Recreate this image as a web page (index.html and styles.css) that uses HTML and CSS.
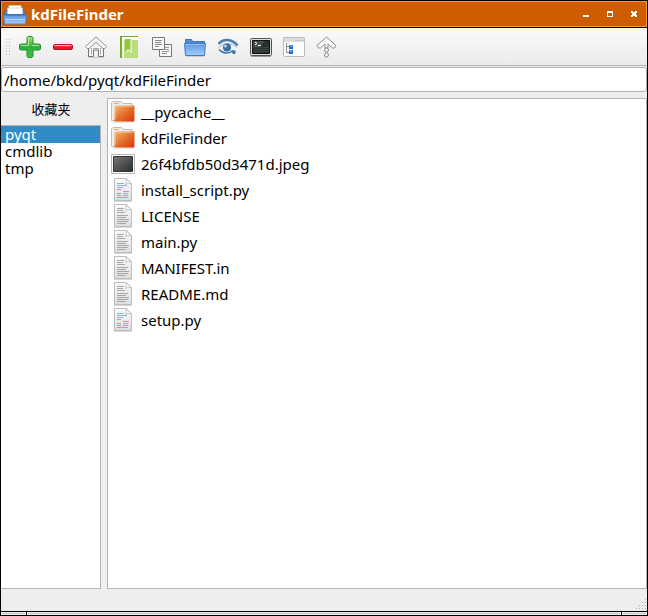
FILE: index.html
```html
<!DOCTYPE html>
<html lang="zh-CN">
<head>
<meta charset="utf-8">
<title>kdFileFinder</title>
<link rel="stylesheet" href="styles.css">
</head>
<body>
<svg class="defs" width="0" height="0" aria-hidden="true">
  <defs>
    <linearGradient id="green" x1="0" y1="0" x2="0" y2="1"><stop offset="0" stop-color="#a5e878"/><stop offset=".5" stop-color="#2fae3c"/><stop offset="1" stop-color="#3fc43f"/></linearGradient>
    <linearGradient id="red" x1="0" y1="0" x2="0" y2="1"><stop offset="0" stop-color="#f4a0a4"/><stop offset=".45" stop-color="#e0242e"/><stop offset="1" stop-color="#d8141e"/></linearGradient>
    <linearGradient id="blue" x1="0" y1="0" x2="0" y2="1"><stop offset="0" stop-color="#5b97e6"/><stop offset="1" stop-color="#a4cdfa"/></linearGradient>
    <linearGradient id="orange" x1="0" y1="0" x2="1" y2="1"><stop offset="0" stop-color="#f8b878"/><stop offset=".5" stop-color="#e2702c"/><stop offset="1" stop-color="#d83408"/></linearGradient>
    <linearGradient id="dark" x1="0" y1="0" x2="1" y2="1"><stop offset="0" stop-color="#7a7a7a"/><stop offset="1" stop-color="#2c2c2c"/></linearGradient>
    <linearGradient id="paper" x1="0" y1="0" x2="0" y2="1"><stop offset="0" stop-color="#fafafa"/><stop offset="1" stop-color="#dedede"/></linearGradient>
    <symbol id="folder" viewBox="0 0 24 24">
      <path d="M.5 20.500V3L2 1.500h8.500l2 2h8.500v17z" fill="#eee" stroke="#bcbcbc"/>
      <path d="M3 3.500h5" stroke="#f2a470"/>
      <path d="M2 22h21.500" stroke="#ccc"/>
      <path d="M3.500 21V7q0-1.500 1.500-1.500h18.500v14.500q0 1.500-1.500 1.500H4z" fill="url(#orange)"/>
      <path d="M4.500 19V6.500h18" fill="none" stroke="#fbc491" stroke-opacity=".6"/>
    </symbol>
    <symbol id="image" viewBox="0 0 24 24">
      <path d="M.5 2.500h23v19H.5z" fill="#fff" stroke="#b4b4b4"/>
      <path d="M2.500 4.500h19v15h-19z" fill="url(#dark)" stroke="#333"/>
    </symbol>
    <symbol id="page" viewBox="0 0 24 24">
      <path d="M3.500.500h12l5 5v17h-17z" fill="url(#paper)" stroke="#bdbdbd"/>
      <path d="M15 .5q1 4-.5 6 3-2 6-.5z" fill="#fff" stroke="#c4c4c4"/>
      <path d="M3 23.500h18" stroke="#d8d8d8"/>
    </symbol>
    <symbol id="text" viewBox="0 0 24 24">
      <use href="#page"/>
      <path d="M6 4.500h7M6 6.500h6M6 8.500h8M6 11.500h11M6 13.500h9M6 15.500h12M6 17.500h11M6 19.500h9" stroke="#a6a6a6"/>
    </symbol>
    <symbol id="script" viewBox="0 0 24 24">
      <use href="#page"/>
      <path d="M6 5.500h7M6 7.500h10M6 9.500h6M12 15.500h5M9 19.500h8" stroke="#86b6d8"/>
      <path d="M6 11.500h4M12 13.500h6M6 17.500h4M12 17.500h5" stroke="#dc88b8"/>
      <path d="M6 15.500h4M6 19.500h3" stroke="#7dbb7d"/>
    </symbol>
  </defs>
</svg>
<div class="window">
  <header class="titlebar">
    <svg width="24" height="24" viewBox="0 0 24 24" aria-hidden="true">
      <path d="M1.500 12 4 7h16l2.500 5z" fill="#5a8fd6" stroke="#3f6fb4"/>
      <path d="M4.500 13V6h1.500V3.500h12V6h1.500v7z" fill="#fff" stroke="#c6c6c6"/>
      <path d="M6.500 6h11" stroke="#ddd"/>
      <path d="M1 12h22v1.500H1z" fill="#3f6fb4"/>
      <path d="M.5 13.500h23l-1 8.500h-21z" fill="url(#blue)" stroke="#4f83c8"/>
      <path d="M2 17.500h20" stroke="#b8d8fc"/>
    </svg>
    <h1>kdFileFinder</h1>
    <div class="controls">
      <button aria-label="最小化"><svg width="8" height="8" viewBox="0 0 8 8"><path d="M1 5h6v2H1z" fill="#fff"/></svg></button>
      <button aria-label="最大化"><svg width="8" height="8" viewBox="0 0 8 8"><path d="M1 1h6v6H1zM2 3v3h4V3z" fill="#fff" fill-rule="evenodd"/></svg></button>
      <button aria-label="关闭"><svg width="8" height="8" viewBox="0 0 8 8"><path d="M1 1h2v1h2V1h2v2H6v2h1v2H5V6H3v1H1V5h1V3H1z" fill="#fff"/></svg></button>
    </div>
  </header>
  <nav class="toolbar">
    <svg class="grip" viewBox="0 0 6 18" aria-hidden="true"><path d="M.5 1v17M3.500 1v17" stroke="#bbb" stroke-dasharray="1 2"/></svg>
    <button aria-label="添加"><svg viewBox="0 0 22 22"><path d="M9 .5h4l1 1V8h6.500l1 1v4l-1 1H14v6.500l-1 1H9l-1-1V14H1.500l-1-1V9l1-1H8V1.500z" fill="url(#green)" stroke="#23902b"/><path d="M9.500 9.500v-8M1.500 9.500h8M13 9.500h7" fill="none" stroke="#bff0a0" stroke-opacity=".8"/></svg></button>
    <button aria-label="删除"><svg viewBox="0 0 22 22"><rect x="1.500" y="8.500" width="19" height="5" rx="1.500" fill="url(#red)" stroke="#b5141c"/><path d="M3 9.500h16" stroke="#f7b0b4"/></svg></button>
    <button aria-label="主目录"><svg viewBox="0 0 22 22"><path d="M3.500 11v9.500h5V14h5v6.500h5V11L11 5z" fill="#f4f4f4" stroke="#777" stroke-linejoin="round"/><path d="M6.500 12v6.500M15.500 12v6.500M8 12.500h6" stroke="#aaa" fill="none"/><path d="M11 1 .5 10.500l1.500 2h2l7-6.500 7 6.500h2l1.500-2z" fill="#fafafa" stroke="#8e8e8e" stroke-linejoin="round"/><path d="M3 21.500h16" stroke="#ccc"/></svg></button>
    <button aria-label="收藏"><svg viewBox="0 0 22 22"><path d="M6 4h14v18H6z" fill="#bade7c"/><path d="M2 0h18v1H4v2h2v19H2z" fill="#7bab2e"/><path d="M4 1h16v3H4z" fill="#fff"/><path d="M4 4h2v18H4z" fill="#eef7dc"/><path d="M7 3h6v13l-3-3-3 4z" fill="#91c73a"/><path d="m7 17 3-3.500 3 3V4" fill="none" stroke="#fff"/></svg></button>
    <button aria-label="复制"><svg viewBox="0 0 22 22"><path d="M8.500 8.500h12v12h-12z" fill="#f6f6f6" stroke="#777"/><path d="M14 11.500h4M14 13.500h4M11 15.500h7M11 17.500h5" stroke="#999"/><path d="M1.500 1.500h12v12h-12z" fill="#fafafa" stroke="#777"/><path d="M4 4.500h7M4 6.500h6M4 8.500h7M4 10.500h4" stroke="#8a8a8a"/></svg></button>
    <button aria-label="打开文件夹"><svg viewBox="0 0 22 22"><path d="M1.500 8V3.500h6l1 2h12V9z" fill="#5789cf" stroke="#3e72bb"/><path d="M.5 7.500h21l-1 12h-19z" fill="url(#blue)" stroke="#3f7bcd"/><path d="M1.500 8.500h19" stroke="#99c3f8"/><path d="M2 20.500h18" stroke="#ccc"/></svg></button>
    <button aria-label="查看"><svg viewBox="0 0 22 22"><path d="M2 12c4-5 12-6 17 0-4 6-12 6-17 0z" fill="#eef3f7"/><path d="M1.500 8C6 2.500 15 2.500 20.500 9.500" fill="none" stroke="#4a7fae" stroke-width="2.500"/><path d="M1 12.500c5-6.500 13-6.500 19-1" fill="none" stroke="#a3bdd4"/><circle cx="10" cy="11.500" r="4" fill="#3670a9"/><circle cx="8.500" cy="10" r="1.500" fill="#b5d2ee"/><path d="M2 13.500c4 4.500 10 4.500 14.500 1" fill="none" stroke="#41759f" stroke-width="1.500"/><path d="M14 14.500h4.500v3.500H16z" fill="#41759f"/></svg></button>
    <button aria-label="终端"><svg viewBox="0 0 22 22"><rect x=".5" y="2.500" width="21" height="17" rx="1" fill="#ddd" stroke="#555"/><path d="M2.500 4.500h17v13h-17z" fill="#26302e" stroke="#111"/><path d="M3 5h12L9 11 3 12z" fill="#5d6462" fill-opacity=".6"/><path d="m5 6 2 1.500L5 9M8 9.500h3" fill="none" stroke="#fff"/><path d="M3 11.500h16M3 13.500h16M3 15.500h16" stroke="#3b4642"/><path d="M1 20.500h20" stroke="#999"/></svg></button>
    <button aria-label="树形视图"><svg viewBox="0 0 22 22"><rect x=".5" y="1.500" width="21" height="19" rx="1" fill="#fff" stroke="#bbb"/><path d="M1 2h20v4H1z" fill="#ddd"/><path d="M12 4.500h2M15 4.500h2M18 4.500h2" stroke="#bbb"/><path d="M3.500 7v9.500H6M3.500 10.500H6" fill="none" stroke="#888"/><path d="M6 9h4v4H6zM6 14h4v4H6z" fill="#2467d4"/><path d="M7 9h2v2H7zM7 14h2v2H7z" fill="#68a3f6"/></svg></button>
    <button aria-label="上级目录"><svg viewBox="0 0 22 22"><path d="M10.500 1 1 9.500l1.500 2.500h2L9 8v4h3V8l4.500 4h2L20 9.500z" fill="#f8f8f8" stroke="#909090" stroke-linejoin="round"/><circle cx="10.500" cy="14" r="2" fill="#fafafa" stroke="#888"/><circle cx="10.500" cy="19" r="2" fill="#fafafa" stroke="#888"/></svg></button>
  </nav>
  <input class="path" type="text" aria-label="路径" value="/home/bkd/pyqt/kdFileFinder">
  <main class="panes">
    <aside class="sidebar">
      <h2>收藏夹</h2>
      <ul class="favorites">
        <li><button class="selected">pyqt</button></li>
        <li><button>cmdlib</button></li>
        <li><button>tmp</button></li>
      </ul>
    </aside>
    <ul class="files">
      <li><svg><use href="#folder"/></svg>__pycache__</li>
      <li><svg><use href="#folder"/></svg>kdFileFinder</li>
      <li><svg><use href="#image"/></svg>26f4bfdb50d3471d.jpeg</li>
      <li><svg><use href="#script"/></svg>install_script.py</li>
      <li><svg><use href="#text"/></svg>LICENSE</li>
      <li><svg><use href="#text"/></svg>main.py</li>
      <li><svg><use href="#text"/></svg>MANIFEST.in</li>
      <li><svg><use href="#text"/></svg>README.md</li>
      <li><svg><use href="#script"/></svg>setup.py</li>
    </ul>
  </main>
  <footer class="statusbar">
    <svg width="12" height="12" viewBox="0 0 12 12" aria-hidden="true"><path d="M10 0h1v1h-1zM7 3h1v1H7zM10 3h1v1h-1zM4 6h1v1H4zM7 6h1v1H7zM10 6h1v1h-1zM1 9h1v1H1zM4 9h1v1H4zM7 9h1v1H7zM10 9h1v1h-1z" fill="#aaa"/></svg>
  </footer>
  <div class="frame-bottom"><span></span><span></span><span></span></div>
</div>
</body>
</html>
```

FILE: styles.css
```css
* { box-sizing: border-box; }
body {
  margin: 0;
  font: 15px/17px "Noto Sans", "Noto Sans CJK SC", sans-serif;
  color: #000;
}
h1, h2, ul { margin: 0; padding: 0; }
ul { list-style: none; }
button {
  padding: 0;
  border: 0;
  background: none;
  font: inherit;
  color: inherit;
}
svg { display: block; flex: none; }
.defs { position: absolute; }
.window {
  display: flex;
  flex-direction: column;
  min-height: 100vh;
  border: 1px solid #000;
  background: #eee;
}
.titlebar {
  display: flex;
  align-items: center;
  height: 26px;
  padding: 0 8px 0 1px;
  border: 1px solid #fa9a2c;
  background: #ce5c00;
  color: #fff;
}
.titlebar h1 {
  flex: 1;
  margin-left: 4px;
  font-size: 15px;
  line-height: 17px;
  font-weight: 700;
}
.controls { display: flex; gap: 16px; }
.toolbar {
  display: flex;
  align-items: center;
  gap: 11px;
  height: 39px;
  padding-left: 5px;
  border-top: 1px solid #000;
  border-bottom: 1px solid #b4b4b4;
  background: linear-gradient(#fafafa, #ebebeb);
}
.toolbar button, .toolbar button svg { width: 22px; height: 22px; }
.grip {
  width: 6px;
  height: 18px;
  margin-right: -4px;
}
.path {
  height: 25px;
  margin-top: 1px;
  padding: 0 2px;
  border: 1px solid #b0b0b0;
  border-radius: 3px;
  background: #fff;
  font: inherit;
  color: inherit;
  outline: 0;
}
.panes {
  display: flex;
  flex: 1;
  gap: 6px;
  padding-top: 6px;
}
.sidebar {
  display: flex;
  flex-direction: column;
  width: 100px;
}
.sidebar h2 {
  padding: 3px 0 7px;
  font-size: 13px;
  line-height: 17px;
  font-weight: 400;
  text-align: center;
}
.favorites {
  flex: 1;
  border: 1px solid #b4b4b4;
  border-left: 0;
  background: #fff;
}
.favorites button {
  display: block;
  width: 100%;
  padding-left: 4px;
  text-align: left;
}
.favorites .selected { background: #308cc6; color: #fff; }
.files {
  flex: 1;
  padding: 0 3px;
  border: 1px solid #b4b4b4;
  background: #fff;
}
.files li {
  display: flex;
  align-items: center;
  gap: 6px;
  height: 26px;
}
.files svg { width: 24px; height: 24px; }
.statusbar {
  display: flex;
  justify-content: flex-end;
  align-items: flex-end;
  height: 22px;
}
.frame-bottom {
  display: flex;
  gap: 1px;
  height: 4px;
  border-top: 1px solid #000;
  background: #000;
}
.frame-bottom span {
  width: 25px;
  border: 1px solid #eee;
  background: #c4c4c4;
}
.frame-bottom span:nth-child(2) { flex: 1; }
```
